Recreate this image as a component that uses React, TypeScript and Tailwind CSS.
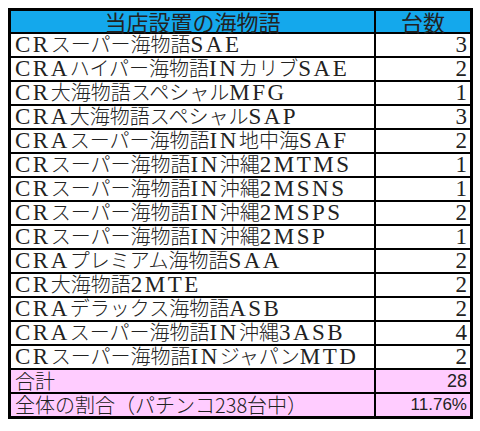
const rows: [string, number][] = [
  ["CRスーパー海物語SAE", 3],
  ["CRAハイパー海物語INカリブSAE", 2],
  ["CR大海物語スペシャルMFG", 1],
  ["CRA大海物語スペシャルSAP", 3],
  ["CRAスーパー海物語IN地中海SAF", 2],
  ["CRスーパー海物語IN沖縄2MTMS", 1],
  ["CRスーパー海物語IN沖縄2MSNS", 1],
  ["CRスーパー海物語IN沖縄2MSPS", 2],
  ["CRスーパー海物語IN沖縄2MSP", 1],
  ["CRAプレミアム海物語SAA", 2],
  ["CR大海物語2MTE", 2],
  ["CRAデラックス海物語ASB", 2],
  ["CRAスーパー海物語IN沖縄3ASB", 4],
  ["CRスーパー海物語INジャパンMTD", 2],
];

const mincho = "font-[family-name:Liberation_Serif,Noto_Sans_CJK_JP,serif]";
const gothic = "font-[family-name:Noto_Sans_CJK_JP,Liberation_Sans,sans-serif]";
const arial = "font-[family-name:Liberation_Sans,sans-serif]";

// split latin runs so they can be spaced out like the MS PMincho ones
function MachineName({ name }: { name: string }) {
  const parts = name.match(/[A-Za-z0-9]+|[^A-Za-z0-9]+/g) ?? [];
  return (
    <>
      {parts.map((p, i) =>
        /[A-Za-z0-9]/.test(p) ? (
          <span key={i} className="text-[23px] tracking-[2.5px]">
            {p}
          </span>
        ) : (
          <span key={i} className="font-light">
            {p}
          </span>
        ),
      )}
    </>
  );
}

export default function App() {
  return (
    <div className="min-h-[431px] w-[480px] bg-white pt-[8px] pl-[8px]">
      <div className="w-[465px] border-[3px] border-black text-[#222]">
        <div className="flex h-[23px] border-b-2 border-black bg-[#14a8ec]">
          <div
            className={`${gothic} flex w-[365px] items-center justify-center border-r-2 border-black text-[22px] leading-[21px]`}
          >
            当店設置の海物語
          </div>
          <div className={`${gothic} flex flex-1 items-center justify-center text-[22px] leading-[21px]`}>
            台数
          </div>
        </div>

        {rows.map(([name, count]) => (
          <div key={name} className="flex h-[24px] border-b-2 border-black">
            <div
              className={`${mincho} flex w-[365px] items-center whitespace-nowrap border-r-2 border-black pl-[4px] text-[20px] leading-[22px]`}
            >
              <MachineName name={name} />
            </div>
            <div className={`${mincho} flex flex-1 items-center justify-end pr-[3px] text-[23px] leading-[22px]`}>
              {count}
            </div>
          </div>
        ))}

        <div className="flex h-[24px] border-b-2 border-black bg-[#ffccff]">
          <div
            className={`${gothic} flex w-[365px] items-center border-r-2 border-black pl-[4px] text-[20px] font-light leading-[22px]`}
          >
            合計
          </div>
          <div className={`${arial} flex flex-1 items-center justify-end pr-[3px] text-[18px] leading-[22px]`}>
            28
          </div>
        </div>
        <div className="flex h-[22px] bg-[#ffccff]">
          <div
            className={`${gothic} flex w-[365px] items-center whitespace-nowrap border-r-2 border-black pl-[4px] text-[20px] font-light leading-[22px]`}
          >
            全体の割合（パチンコ238台中）
          </div>
          <div className={`${arial} flex flex-1 items-center justify-end pr-[3px] text-[17px] leading-[22px]`}>
            11.76%
          </div>
        </div>
      </div>
    </div>
  );
}
